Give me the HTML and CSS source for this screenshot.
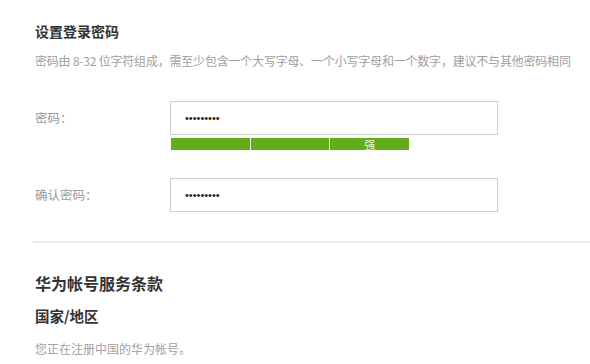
FILE: index.html
```html
<!DOCTYPE html>
<html lang="zh-CN">
<head>
    <meta charset="UTF-8">
    <meta name="viewport" content="width=device-width, initial-scale=1.0">
    <title>设置登录密码</title>
    <link rel="stylesheet" href="styles.css">
</head>
<body>
    <main>
        <section class="password-setup">
            <h2 class="title">设置登录密码</h2>
            <p class="hint">密码由 8-32 位字符组成，需至少包含一个大写字母、一个小写字母和一个数字，建议不与其他密码相同</p>

            <div class="form-row">
                <label class="form-label" for="pwd">密码：</label>
                <div class="field">
                    <input class="pwd-input" id="pwd" type="password" value="123456789">
                    <div class="strength">
                        <span class="strength-seg"></span>
                        <span class="strength-seg"></span>
                        <span class="strength-seg">强</span>
                    </div>
                </div>
            </div>

            <div class="form-row confirm-row">
                <label class="form-label" for="pwd2">确认密码：</label>
                <div class="field">
                    <input class="pwd-input" id="pwd2" type="password" value="123456789">
                </div>
            </div>
        </section>

        <hr class="divider">

        <section class="terms">
            <h2 class="terms-title">华为帐号服务条款</h2>
            <h3 class="region">国家/地区</h3>
            <p class="region-text">您正在注册中国的华为帐号。</p>
        </section>
    </main>
</body>
</html>
```

FILE: styles.css
```css
body {
    font-family: "Noto Sans CJK SC", "Liberation Sans", sans-serif;
    margin: 0;
    padding: 0;
    background-color: #fff;
    color: #333;
}

main {
    padding: 0 0 0 35px;
}

.title {
    font-size: 14px;
    font-weight: bold;
    line-height: 20px;
    margin: 21px 0 0;
    color: #333;
}

.hint {
    font-size: 12px;
    line-height: 20px;
    margin: 10px 0 0;
    color: #a0a0a0;
    white-space: nowrap;
    letter-spacing: -0.2px;
}

.form-row {
    display: flex;
    align-items: flex-start;
    margin-top: 30px;
}

.confirm-row {
    margin-top: 28px;
}

.form-label {
    width: 135px;
    font-size: 12.5px;
    line-height: 33px;
    color: #999;
}

.field {
    width: 328px;
}

.pwd-input {
    display: block;
    box-sizing: border-box;
    width: 328px;
    height: 34px;
    margin: 0;
    padding: 0 14px;
    border: 1px solid #cfcfcf;
    font-family: "Liberation Sans", sans-serif;
    font-size: 11px;
    color: #222;
    outline: none;
}

.strength {
    display: flex;
    gap: 1px;
    width: 238px;
    margin: 3px 0 0 1px;
}

.strength-seg {
    flex: 1;
    height: 12px;
    background-color: #62ad1c;
    color: #e9f5dc;
    font-size: 11px;
    line-height: 12px;
    text-align: center;
}

.divider {
    border: none;
    border-top: 2px solid #ececec;
    margin: 29px 0 0 -2px;
}

.terms-title {
    font-size: 16px;
    font-weight: bold;
    line-height: 22px;
    margin: 29px 0 0;
    color: #333;
}

.region {
    font-size: 14.5px;
    font-weight: bold;
    line-height: 20px;
    margin: 12px 0 0;
    color: #333;
}

.region-text {
    font-size: 12px;
    line-height: 18px;
    margin: 14px 0 0;
    color: #a0a0a0;
}
```
